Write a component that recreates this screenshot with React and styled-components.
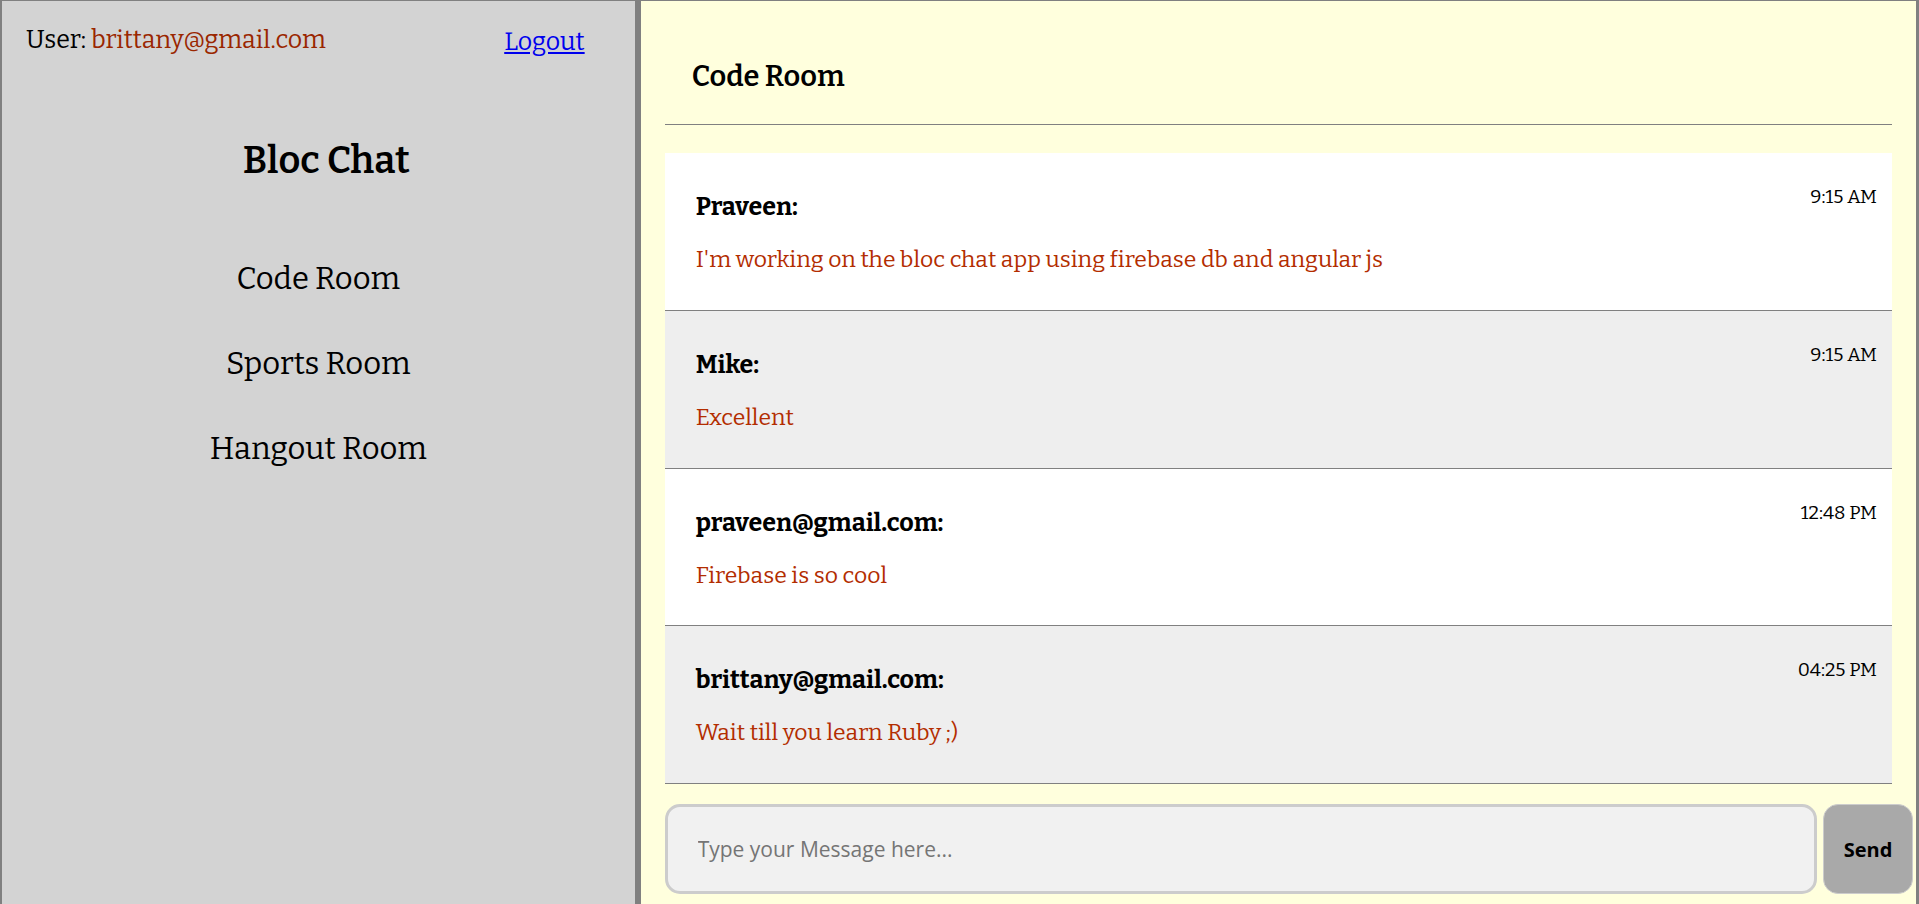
import React, { useState } from 'react';
import styled, { createGlobalStyle } from 'styled-components';

const serif = `Bitter, "Noto Serif", "DejaVu Serif Condensed", serif`;
const sans = `Tahoma, "Open Sans", "DejaVu Sans Condensed", sans-serif`;

const GlobalStyle = createGlobalStyle`
  *, *::before, *::after { box-sizing: border-box; }
  body { margin: 0; font-family: ${serif}; color: #000; }
  h1, h2, h3, p, ul, ol { margin: 0; padding: 0; }
  ul, ol { list-style: none; }
`;

const Page = styled.div`
  display: grid;
  grid-template-columns: minmax(0, 1fr) minmax(0, 2fr);
  min-height: 100vh;
`;

const Sidebar = styled.aside`
  background: lightgray;
  border: solid gray;
  border-width: 1px 5px 0 2px;
`;

const UserBar = styled.div`
  display: flex;
  justify-content: space-between;
  align-items: flex-start;
  padding: 24px 50px 0 24px;
  font-size: 25px;
  line-height: 30px;
`;

const Email = styled.span`
  color: #9a2600;
`;

const LogoutLink = styled.a`
  color: #0000ee;
  line-height: 34px;
`;

const AppTitle = styled.h1`
  padding: 79px 0 0 16px;
  font-size: 38px;
  line-height: 44px;
  font-weight: 600;
  text-align: center;
`;

const RoomList = styled.ul`
  display: flex;
  flex-direction: column;
  align-items: center;
  gap: 48px;
  padding-top: 78px;
`;

const RoomButton = styled.button`
  display: block;
  padding: 0;
  border: 0;
  background: none;
  color: inherit;
  font: inherit;
  font-size: 31px;
  line-height: 37px;
  cursor: pointer;
`;

const Room = styled.main`
  display: flex;
  flex-direction: column;
  padding: 0 3px 10px 24px;
  background: #ffffdd;
  border: solid gray;
  border-width: 1px 3px 0 1px;
`;

const RoomTitle = styled.h2`
  margin: 0 21px 28px 0;
  padding: 58px 27px 30px;
  border-bottom: 1px solid gray;
  font-size: 29px;
  line-height: 35px;
  font-weight: 600;
`;

const MessageList = styled.ol`
  flex: 1;
  display: grid;
  grid-auto-rows: 1fr;
  margin: 0 21px 20px 0;
`;

const MessageRow = styled.li`
  display: flex;
  justify-content: space-between;
  padding: 0 15px 36px 31px;
  border-bottom: 1px solid gray;
  background: #fff;

  &:nth-child(even) {
    background: #eee;
  }
`;

const MessageBody = styled.div`
  display: flex;
  flex-direction: column;
  gap: 23px;
  padding-top: 39px;
`;

const Author = styled.h3`
  font-size: 25px;
  line-height: 30px;
  font-weight: 700;
`;

const MessageText = styled.p`
  color: #b32d00;
  font-size: 23px;
  line-height: 28px;
`;

const Time = styled.time`
  padding-top: 32px;
  font-size: 19px;
  line-height: 24px;
  white-space: nowrap;
`;

const Composer = styled.form`
  display: flex;
  gap: 6px;
  height: 90px;
`;

const MessageInput = styled.input`
  flex: 1;
  min-width: 0;
  padding: 0 30px;
  border: 3px solid #ccc;
  border-radius: 15px;
  background: #f1f1f1;
  font-family: ${sans};
  font-size: 21px;

  &::placeholder {
    color: #757575;
    opacity: 1;
  }
`;

const SendButton = styled.button`
  width: 90px;
  padding: 0;
  border: 1px solid #ccc;
  border-radius: 15px;
  background: darkgray;
  color: #000;
  font-family: ${sans};
  font-size: 20px;
  font-weight: 700;
  cursor: pointer;
`;

const rooms = ['Code Room', 'Sports Room', 'Hangout Room'];

const messages = [
  { author: 'Praveen', time: '9:15 AM', text: "I'm working on the bloc chat app using firebase db and angular js" },
  { author: 'Mike', time: '9:15 AM', text: 'Excellent' },
  { author: 'praveen@gmail.com', time: '12:48 PM', text: 'Firebase is so cool' },
  { author: 'brittany@gmail.com', time: '04:25 PM', text: 'Wait till you learn Ruby ;)' },
];

export default function App() {
  const [active, setActive] = useState(rooms[0]);
  const [draft, setDraft] = useState('');

  return (
    <>
      <GlobalStyle />
      <Page>
        <Sidebar>
          <UserBar>
            <span>User: <Email>brittany@gmail.com</Email></span>
            <LogoutLink href="#logout">Logout</LogoutLink>
          </UserBar>
          <AppTitle>Bloc Chat</AppTitle>
          <RoomList>
            {rooms.map((room) => (
              <li key={room}>
                <RoomButton type="button" onClick={() => setActive(room)}>{room}</RoomButton>
              </li>
            ))}
          </RoomList>
        </Sidebar>
        <Room>
          <RoomTitle>{active}</RoomTitle>
          <MessageList>
            {messages.map((m) => (
              <MessageRow key={m.author}>
                <MessageBody>
                  <Author>{m.author}:</Author>
                  <MessageText>{m.text}</MessageText>
                </MessageBody>
                <Time>{m.time}</Time>
              </MessageRow>
            ))}
          </MessageList>
          <Composer onSubmit={(e) => { e.preventDefault(); setDraft(''); }}>
            <MessageInput
              type="text"
              aria-label="Message"
              placeholder="Type your Message here..."
              value={draft}
              onChange={(e) => setDraft(e.target.value)}
            />
            <SendButton type="submit">Send</SendButton>
          </Composer>
        </Room>
      </Page>
    </>
  );
}
